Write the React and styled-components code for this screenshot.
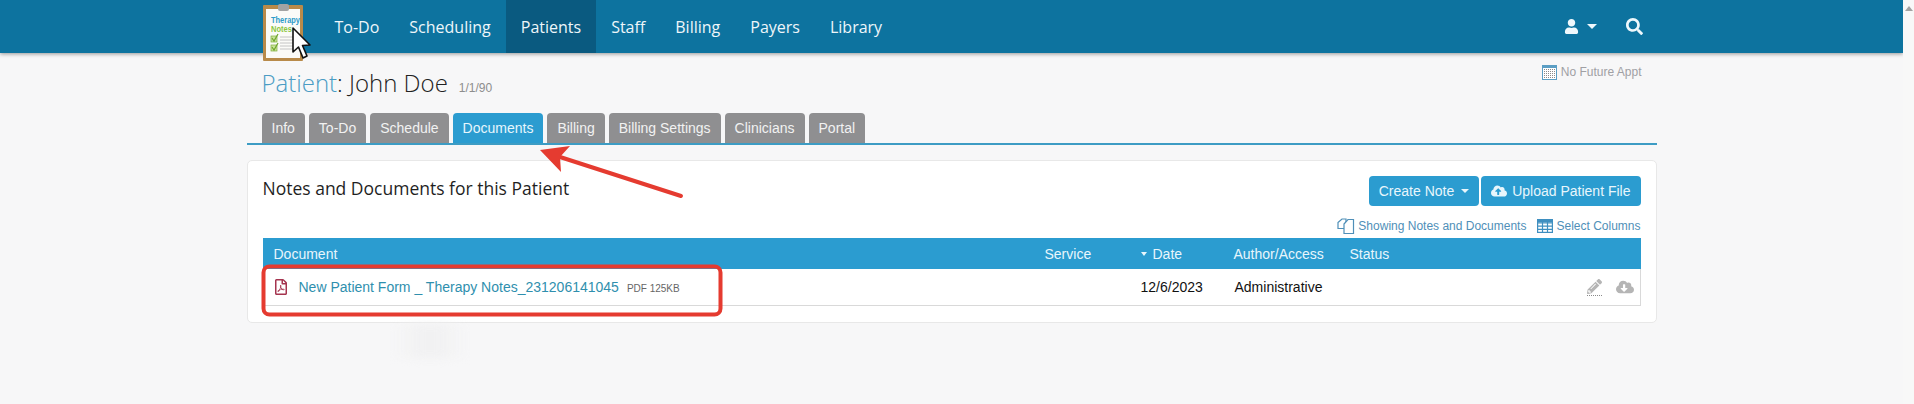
import React from 'react';
import styled, { createGlobalStyle } from 'styled-components';
import {
  FaUser,
  FaSearch,
  FaCloudUploadAlt,
  FaCloudDownloadAlt,
  FaPencilAlt,
  FaRegFilePdf,
} from 'react-icons/fa';

const GlobalStyle = createGlobalStyle`
  html, body {
    margin: 0;
    padding: 0;
    height: 404px;
    overflow: hidden;
    background: #f7f7f8;
    font-family: "Liberation Sans", Arial, sans-serif;
  }
  * { box-sizing: border-box; }
`;

const Shell = styled.div`
  position: relative;
  display: flex;
  width: 1914px;
  height: 404px;
  overflow: hidden;
`;

const Page = styled.div`
  flex: 1;
  min-width: 0;
`;

const Scrollbar = styled.div`
  width: 11px;
  background: #f8f8f8;
  display: flex;
  justify-content: center;
  padding-top: 6px;
`;

const ScrollArrow = styled.div`
  width: 0;
  height: 0;
  border-left: 4px solid transparent;
  border-right: 4px solid transparent;
  border-bottom: 5px solid #a3a3a3;
`;

const Nav = styled.div`
  height: 53px;
  background: #0d739f;
  box-shadow: 0 1px 4px rgba(0, 0, 0, 0.4);
`;

const Inner = styled.div`
  width: 1410px;
  margin: 0 auto;
`;

const NavInner = styled(Inner)`
  display: flex;
  height: 53px;
  padding: 0 14px 0 15px;
`;

const Logo = styled.svg`
  flex: none;
  width: 50px;
  height: 60px;
  margin-top: 3px;
  margin-right: 8px;
  position: relative;
  z-index: 2;
`;

const NavItem = styled.div`
  display: flex;
  align-items: center;
  padding: 0 15px;
  height: 53px;
  color: #eef6fa;
  font-family: "Open Sans", sans-serif;
  font-size: 16px;
  background: ${({ active }) => (active ? '#0a5a80' : 'transparent')};
`;

const NavRight = styled.div`
  margin-left: auto;
  display: flex;
  align-items: center;
  color: #eef8fc;
`;

const NavCaret = styled.div`
  width: 0;
  height: 0;
  margin: 0 29px 0 8px;
  border-left: 5px solid transparent;
  border-right: 5px solid transparent;
  border-top: 5px solid #eef8fc;
`;

const TitleRow = styled.div`
  display: flex;
  justify-content: space-between;
  align-items: flex-start;
  height: 49px;
  margin-top: 11px;
  padding: 0 15px;
`;

const Title = styled.div`
  display: flex;
  align-items: baseline;
  margin-top: 1px;
  line-height: 36px;
  font-family: "Open Sans", sans-serif;
  font-weight: 300;
  font-size: 24px;
  color: #222;
`;

const TitleLabel = styled.span`
  color: #4b9cc4;
`;

const Dob = styled.span`
  margin-left: 11px;
  font-family: "Liberation Sans", sans-serif;
  font-size: 12px;
  color: #8d8d8d;
`;

const Appt = styled.div`
  display: flex;
  align-items: center;
  gap: 4px;
  height: 16px;
  font-size: 12px;
  color: #a0a0a4;
`;

const Tabs = styled.div`
  display: flex;
  gap: 4px;
  padding: 0 15px;
  border-bottom: 2px solid #3d9cc4;
`;

const Tab = styled.div`
  display: flex;
  align-items: center;
  height: 30px;
  padding: 0 10px;
  border-radius: 4px 4px 0 0;
  font-size: 14px;
  color: ${({ active }) => (active ? '#e6f6fd' : '#f2f2f2')};
  background: ${({ active }) => (active ? '#2b9cd0' : '#8f8f91')};
`;

const Panel = styled.div`
  margin-top: 15px;
  padding: 15px 15px 16px;
  background: #fff;
  border: 1px solid #e8e8e8;
  border-radius: 5px;
`;

const PanelHead = styled.div`
  display: flex;
  justify-content: space-between;
  align-items: center;
  height: 30px;
`;

const PanelTitle = styled.div`
  margin-top: -6px;
  font-family: "Open Sans", sans-serif;
  font-size: 17.5px;
  color: #1f1f1f;
`;

const Buttons = styled.div`
  display: flex;
  gap: 2px;
`;

const Button = styled.div`
  display: flex;
  align-items: center;
  height: 30px;
  padding: 0 ${({ wide }) => (wide ? '10px' : '10px')};
  border-radius: 4px;
  background: #2b9cd0;
  color: #e8f6fc;
  font-size: 14px;
`;

const ButtonCaret = styled.div`
  width: 0;
  height: 0;
  margin-left: 7px;
  border-left: 4.5px solid transparent;
  border-right: 4.5px solid transparent;
  border-top: 4.5px solid #e8f6fc;
`;

const UploadIcon = styled(FaCloudUploadAlt)`
  width: 16px;
  height: 14px;
  margin-right: 5px;
`;

const Links = styled.div`
  display: flex;
  justify-content: flex-end;
  align-items: center;
  height: 32px;
  padding-top: 8px;
  gap: 11px;
`;

const ColumnLink = styled.div`
  display: flex;
  align-items: center;
  gap: 3px;
  font-size: 12px;
  color: #4f8fb8;
`;

const TableRow = styled.div`
  display: grid;
  grid-template-columns: 771px 95px 94px 116px 1fr;
  align-items: center;
`;

const TableHead = styled(TableRow)`
  height: 31px;
  background: #2b9cd0;
  color: #e8f6fc;
`;

const TableBody = styled(TableRow)`
  height: 37px;
  border-right: 1px solid #d9d9d9;
  border-bottom: 1px solid #d9d9d9;
  border-left: 1px solid #d9d9d9;
  color: #111;
`;

const Cell = styled.div`
  display: flex;
  align-items: center;
  padding-left: 11px;
  font-size: 14px;
`;

const BodyFirstCell = styled(Cell)`
  padding-left: 10px;
`;

const SortCaret = styled.div`
  width: 0;
  height: 0;
  margin-right: 6px;
  margin-left: 1px;
  border-left: 3.5px solid transparent;
  border-right: 3.5px solid transparent;
  border-top: 4px solid #e8f6fc;
`;

const PdfIcon = styled(FaRegFilePdf)`
  width: 14px;
  height: 16px;
  margin-right: 11px;
  color: #a5344f;
`;

const DocLink = styled.span`
  color: #2f8fae;
  font-size: 14px;
`;

const DocMeta = styled.span`
  margin-left: 8px;
  font-size: 10px;
  color: #666;
  padding-top: 2px;
`;

const Actions = styled.div`
  display: flex;
  justify-content: flex-end;
  align-items: center;
  gap: 13px;
  padding-right: 6px;
  color: #b5b5b5;
`;

const PencilWrap = styled.div`
  position: relative;
  display: flex;
  width: 16px;
  height: 16px;
  &::after {
    content: '';
    position: absolute;
    left: 0;
    bottom: -1px;
    width: 15px;
    border-bottom: 1px dotted #8a8a8a;
  }
`;

const Overlay = styled.svg`
  position: absolute;
  top: 0;
  left: 0;
  width: 1914px;
  height: 404px;
  pointer-events: none;
  z-index: 3;
`;

const Smudge = styled.div`
  position: absolute;
  left: 392px;
  top: 324px;
  width: 76px;
  height: 34px;
  background: linear-gradient(90deg, transparent, #f1f1f2 40%, #f1f1f2 60%, transparent);
  filter: blur(4px);
`;

const navItems = ['To-Do', 'Scheduling', 'Patients', 'Staff', 'Billing', 'Payers', 'Library'];
const tabs = ['Info', 'To-Do', 'Schedule', 'Documents', 'Billing', 'Billing Settings', 'Clinicians', 'Portal'];

const CalendarIcon = () => (
  <svg width="15" height="15" viewBox="0 0 15 15">
    <rect x="0.5" y="0.5" width="14" height="14" fill="#fff" stroke="#5b9ec4" />
    <rect x="0" y="0" width="15" height="3" fill="#5b9ec4" />
    {[3, 5, 7, 9, 11].map((y) =>
      [2.5, 4.5, 6.5, 8.5, 10.5, 12.5].map((x) => (
        <rect key={`${x}-${y + 1}`} x={x - 0.5} y={y + 1} width="1" height="1" fill="#8a8a8a" />
      ))
    )}
  </svg>
);

const CopyIcon = () => (
  <svg width="18" height="18" viewBox="0 0 18 18" fill="#fff" stroke="#4f8fb8" strokeWidth="1.2">
    <path d="M1 5.5 L5 2 H9 V11.5 H1 Z" />
    <path d="M7 7 L11 2.5 H16.5 V16.5 H7 Z" />
  </svg>
);

const GridIcon = () => (
  <svg width="16" height="14" viewBox="0 0 16 14" fill="none" stroke="#3f8fc0" strokeWidth="1.2">
    <rect x="0.6" y="0.6" width="14.8" height="12.8" />
    <path d="M0.6 4 H15.4 M0.6 7.2 H15.4 M0.6 10.4 H15.4 M5.5 0.6 V13.4 M10.5 0.6 V13.4" />
    <rect x="0.6" y="0.6" width="14.8" height="3" fill="#3f8fc0" stroke="none" />
  </svg>
);

const App = () => (
  <Shell>
    <GlobalStyle />
    <Page>
      <Nav>
        <NavInner>
          <Logo viewBox="0 0 50 60">
            <rect x="1" y="2" width="40" height="56" rx="1" fill="#b88a4a" />
            <rect x="4" y="6" width="34" height="49" fill="#fbfbf8" />
            <rect x="16" y="1" width="11" height="7" rx="2" fill="#a3a3a3" />
            <text x="9" y="20" fontFamily="Liberation Sans" fontWeight="700" fontSize="9.5" fill="#2e9cc9" textLength="29" lengthAdjust="spacingAndGlyphs">Therapy</text>
            <text x="9" y="29" fontFamily="Liberation Sans" fontWeight="700" fontSize="9.5" fill="#8cc63f" textLength="21" lengthAdjust="spacingAndGlyphs">Notes</text>
            <rect x="9" y="33" width="6" height="6" fill="#c9e39a" stroke="#7fae3a" strokeWidth="0.7" />
            <rect x="9" y="42" width="6" height="6" fill="#c9e39a" stroke="#7fae3a" strokeWidth="0.7" />
            <path d="M10 35 L12 38 L16 31 M10 44 L12 47 L16 40" fill="none" stroke="#6fa52c" strokeWidth="1.2" />
            <path d="M18 34 H31 M18 37 H31 M18 40 H31 M18 43 H31 M18 46 H31" stroke="#c4c4c4" strokeWidth="1" />
            <path d="M31 25 L31 49 L36.5 44 L41 55 L45 53 L40.5 42.5 L48 42 Z" fill="#fff" stroke="#111" strokeWidth="1.6" strokeLinejoin="round" />
          </Logo>
          {navItems.map((item) => (
            <NavItem key={item} active={item === 'Patients' ? 1 : undefined}>{item}</NavItem>
          ))}
          <NavRight>
            <FaUser size={15} />
            <NavCaret />
            <FaSearch size={17} />
          </NavRight>
        </NavInner>
      </Nav>
      <Inner>
        <TitleRow>
          <Title>
            <span><TitleLabel>Patient</TitleLabel>: John Doe</span>
            <Dob>1/1/90</Dob>
          </Title>
          <Appt>
            <CalendarIcon />
            No Future Appt
          </Appt>
        </TitleRow>
        <Tabs>
          {tabs.map((tab) => (
            <Tab key={tab} active={tab === 'Documents' ? 1 : undefined}>{tab}</Tab>
          ))}
        </Tabs>
        <Panel>
          <PanelHead>
            <PanelTitle>Notes and Documents for this Patient</PanelTitle>
            <Buttons>
              <Button>
                Create Note
                <ButtonCaret />
              </Button>
              <Button wide={1}>
                <UploadIcon />
                Upload Patient File
              </Button>
            </Buttons>
          </PanelHead>
          <Links>
            <ColumnLink><CopyIcon />Showing Notes and Documents</ColumnLink>
            <ColumnLink><GridIcon />Select Columns</ColumnLink>
          </Links>
          <TableHead>
            <Cell>Document</Cell>
            <Cell>Service</Cell>
            <Cell><SortCaret />Date</Cell>
            <Cell>Author/Access</Cell>
            <Cell>Status</Cell>
          </TableHead>
          <TableBody>
            <BodyFirstCell>
              <PdfIcon />
              <DocLink>New Patient Form _ Therapy Notes_231206141045</DocLink>
              <DocMeta>PDF 125KB</DocMeta>
            </BodyFirstCell>
            <Cell />
            <Cell>12/6/2023</Cell>
            <Cell>Administrative</Cell>
            <Actions>
              <PencilWrap><FaPencilAlt size={15} /></PencilWrap>
              <FaCloudDownloadAlt size={18} />
            </Actions>
          </TableBody>
        </Panel>
      </Inner>
    </Page>
    <Scrollbar>
      <ScrollArrow />
    </Scrollbar>
    <Smudge />
    <Overlay viewBox="0 0 1914 404">
      <rect x="263.5" y="266.5" width="457" height="48" rx="6" fill="none" stroke="#e53b30" strokeWidth="4" />
      <path d="M681 196 L560 157" stroke="#e53b30" strokeWidth="4" strokeLinecap="round" />
      <path d="M540 150 L570 146 L560 157 L561 172 Z" fill="#e53b30" />
    </Overlay>
  </Shell>
);

export default App;
